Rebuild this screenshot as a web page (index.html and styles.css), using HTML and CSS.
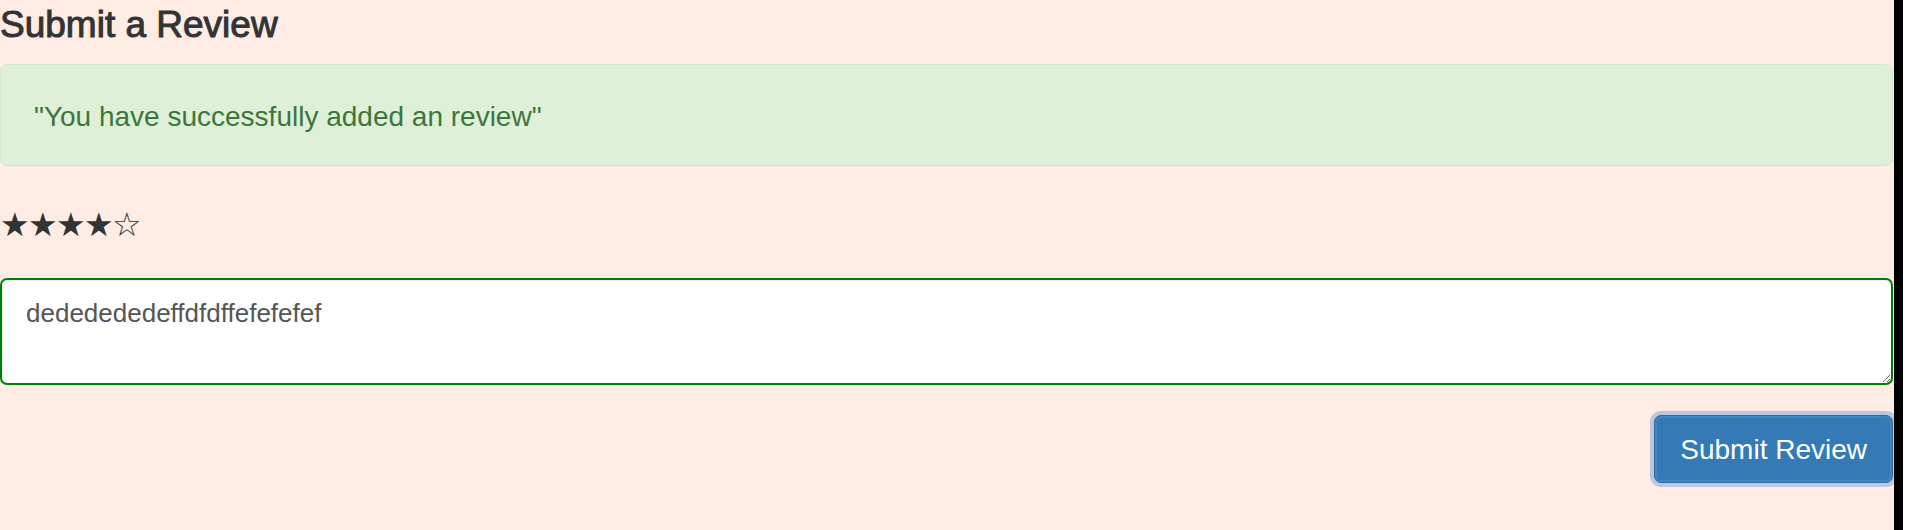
FILE: index.html
```html
<!DOCTYPE html>
<html lang="en">
<head>
<meta charset="utf-8">
<title>Submit a Review</title>
<link rel="stylesheet" href="styles.css">
</head>
<body>
<div class="window">
  <main class="page">
    <h3 class="title">Submit a Review</h3>
    <div class="alert">"You have successfully added an review"</div>
    <div class="stars"><span class="star">★</span><span class="star">★</span><span class="star">★</span><span class="star">★</span><span class="star">☆</span></div>
    <textarea class="review">dededededeffdfdffefefefef</textarea>
    <div class="actions"><button class="btn" type="button">Submit Review</button></div>
  </main>
  <div class="edge"></div>
  <div class="gutter"></div>
</div>
</body>
</html>
```

FILE: styles.css
```css
* { box-sizing: border-box; }
html, body { margin: 0; padding: 0; background: #ffffff; }
body { font-family: "Liberation Sans", Arial, sans-serif; }

.window {
  display: flex;
  height: 530px;
}
.page {
  flex: none;
  width: 1894px;
  background: #ffede5;
  color: #333333;
}
.edge {
  flex: none;
  width: 9px;
  background: #000000;
}
.gutter {
  flex: 1;
  background: #ffffff;
}

.title {
  margin: 5px 0 0;
  font-size: 37px;
  line-height: 40px;
  font-weight: 400;
  -webkit-text-stroke: 1px #333333;
  color: #333333;
}

.alert {
  margin-top: 19px;
  width: 1893px;
  padding: 32px 33px 28px;
  border: 1px solid #d6e9c6;
  border-radius: 7px;
  background: #dff0d8;
  color: #3c763d;
  font-size: 28px;
  line-height: 40px;
}

.stars {
  display: flex;
  margin-top: 44px;
  height: 30px;
  align-items: center;
  font-family: "DejaVu Sans", sans-serif;
  font-size: 33px;
  line-height: 30px;
  color: #333333;
}
.star {
  width: 28px;
  display: inline-block;
}

.review {
  display: block;
  margin-top: 38px;
  width: 1893px;
  height: 107px;
  padding: 15px 24px 9px;
  border: 2px solid #008000;
  border-radius: 7px;
  background: #ffffff;
  box-shadow: inset 0 1px 1px rgba(0, 0, 0, 0.075);
  font-family: "Liberation Sans", Arial, sans-serif;
  font-size: 26px;
  line-height: 37px;
  color: #555555;
  resize: vertical;
  outline: none;
}

.actions {
  display: flex;
  justify-content: flex-end;
  width: 1893px;
  margin-top: 30px;
}
.btn {
  height: 68px;
  padding: 2px 25px 0;
  border: 1px solid #2e6da4;
  border-radius: 7px;
  background: #337ab7;
  color: #ffffff;
  font-family: "Liberation Sans", Arial, sans-serif;
  font-size: 28px;
  line-height: 40px;
  box-shadow: inset 0 0 0 2px #4384bf, 0 0 0 4px rgba(102, 153, 214, 0.45);
  cursor: pointer;
}
```
